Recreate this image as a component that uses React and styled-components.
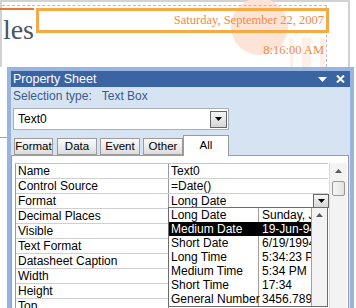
import React from "react";
import styled, { createGlobalStyle } from "styled-components";

const GlobalStyle = createGlobalStyle`
  html, body {
    margin: 0;
    padding: 0;
    background: #fff;
  }
  body {
    width: 356px;
    height: 308px;
    overflow: hidden;
  }
`;

const Screen = styled.div`
  position: relative;
  width: 356px;
  height: 308px;
  overflow: hidden;
  background: #fff;
  font-family: "Liberation Sans", Arial, sans-serif;
  font-size: 12px;
  color: #000;
`;

/* ---------- report design surface (top) ---------- */

const Header = styled.div`
  position: relative;
  box-sizing: border-box;
  width: 350px;
  height: 67px;
  border-top: 2px solid #d2d2d2;
  border-left: 2px solid #d2d2d2;
  border-right: 2px solid #d2d2d2;
`;

const Circle = styled.div`
  position: absolute;
  left: 229px;
  top: -4px;
  width: 57px;
  height: 57px;
  border-radius: 50%;
  background: #fde4d6;
`;

const Stripe = styled.div`
  position: absolute;
  top: 36px;
  bottom: 0;
  left: ${(p) => p.$x}px;
  width: ${(p) => p.$w}px;
  background: #fdf0e9;
`;

const Section = styled.div`
  position: relative;
  box-sizing: border-box;
  width: 325px;
  height: 62px;
  margin-top: 3px;
  border-top: 1px dashed #bdbdbd;
  border-right: 1px dashed #bdbdbd;
`;

const FieldRow = styled.div`
  display: flex;
  align-items: flex-start;
  margin-top: 2px;
`;

const TitleLabel = styled.div`
  box-sizing: border-box;
  width: 34px;
  height: 36px;
  margin-left: -2px;
  border-top: 2px solid #e8782f;
  overflow: hidden;
  display: flex;
  justify-content: flex-end;
  font-family: "Liberation Serif", "Times New Roman", serif;
  font-size: 28px;
  line-height: 40px;
  color: #4a5462;
`;

const DateBox = styled.div`
  box-sizing: border-box;
  width: 293px;
  height: 25px;
  margin-left: 2px;
  margin-right: -4px;
  border: 3px solid #f7a944;
  padding-right: 2px;
  text-align: right;
  font-family: "Liberation Serif", "Times New Roman", serif;
  font-size: 12.5px;
  line-height: 19px;
  color: #ef8b47;
`;

const TimeText = styled.div`
  width: 322px;
  margin-top: -1px;
  text-align: right;
  font-family: "Liberation Serif", "Times New Roman", serif;
  font-size: 12.5px;
  line-height: 14px;
  color: #ef8b47;
`;

const OrangeTick = styled.div`
  position: absolute;
  left: 0;
  top: 137px;
  width: 7px;
  height: 1px;
  background: #f08a45;
`;

/* ---------- property sheet window ---------- */

const Window = styled.div`
  box-sizing: border-box;
  width: 347px;
  height: 241px;
  margin-left: 7px;
  padding: 4px 4px 0 3px;
  border-left: 1px solid #a8b1bf;
  background: #98b5e2;
  display: flex;
  flex-direction: column;
`;

const TitleBar = styled.div`
  height: 16px;
  flex: none;
  display: flex;
  align-items: center;
  padding: 0 5px 0 2px;
  background: #3a64a2;
  color: #fff;
  font-size: 12.5px;
`;

const TitleText = styled.span`
  flex: 1;
  line-height: 16px;
`;

const TitleIcons = styled.div`
  display: flex;
  align-items: center;
  gap: 9px;
`;

const Panel = styled.div`
  flex: 1;
  background: #d5e3f3;
  display: flex;
  flex-direction: column;
  min-height: 0;
`;

const SelectionType = styled.div`
  height: 19px;
  line-height: 19px;
  padding-left: 2px;
  color: #395b8f;
  white-space: nowrap;
`;

const SelValue = styled.span`
  margin-left: 10px;
`;

const Combo = styled.div`
  box-sizing: border-box;
  width: 216px;
  height: 22px;
  margin: 2px 0 0 2px;
  border: 1px solid #a9b0b9;
  background: #fff;
  display: flex;
  align-items: center;
  padding: 0 1px 0 4px;
`;

const ComboText = styled.span`
  flex: 1;
`;

const DropButton = styled.div`
  box-sizing: border-box;
  width: ${(p) => p.$w}px;
  height: ${(p) => p.$h}px;
  border: 1px solid #666;
  background: linear-gradient(#f6f6f6, #d6d6d6);
  display: flex;
  align-items: center;
  justify-content: center;
`;

const TabRow = styled.div`
  display: flex;
  align-items: flex-end;
  height: 20px;
  margin-top: 5px;
  padding-left: 3px;
  position: relative;
  z-index: 1;
`;

const Tab = styled.div`
  box-sizing: border-box;
  width: ${(p) => p.$w}px;
  margin-right: ${(p) => p.$gap}px;
  height: ${(p) => (p.$active ? 21 : 17)}px;
  margin-bottom: ${(p) => (p.$active ? -1 : 0)}px;
  border: 1px solid #9c9c9c;
  border-bottom: ${(p) => (p.$active ? "none" : "1px solid #9c9c9c")};
  background: ${(p) =>
    p.$active ? "#fff" : "linear-gradient(#fafafa, #e9e9e9 60%, #dcdcdc)"};
  text-align: center;
  font-size: 11.5px;
  line-height: ${(p) => (p.$active ? 19 : 15)}px;
  white-space: nowrap;
`;

const TabBody = styled.div`
  flex: 1;
  box-sizing: border-box;
  width: 338px;
  border: 1px solid #9c9c9c;
  border-bottom: none;
  background: #fff;
  padding: 7px 0 0 3px;
  display: flex;
  align-items: flex-start;
  overflow: hidden;
`;

const Grid = styled.div`
  position: relative;
  box-sizing: border-box;
  width: 313px;
  border-left: 1px solid #9a9a9a;
  border-top: 1px solid #c6c6c6;
`;

const Row = styled.div`
  display: flex;
  height: 15px;
  box-sizing: border-box;
  border-bottom: 1px solid #cfcfcf;
`;

const NameCell = styled.div`
  width: 152px;
  padding-left: 2px;
  box-sizing: border-box;
  line-height: 14px;
  white-space: nowrap;
`;

const ValueCell = styled.div`
  position: relative;
  flex: 1;
  border-left: 1px solid #9a9a9a;
  padding-left: 2px;
  line-height: 14px;
  white-space: nowrap;
`;

const CellButton = styled.div`
  position: absolute;
  right: -1px;
  top: 0;
`;

const ScrollBar = styled.div`
  box-sizing: border-box;
  width: 18px;
  height: 160px;
  margin-left: 1px;
  border-left: 1px solid #dadada;
  background: #f3f3f3;
  display: flex;
  flex-direction: column;
  align-items: center;
`;

const ScrollArrow = styled.div`
  height: 16px;
  display: flex;
  align-items: center;
  justify-content: center;
`;

const Thumb = styled.div`
  box-sizing: border-box;
  width: 13px;
  height: 15px;
  margin-top: 2px;
  border: 1px solid #9a9a9a;
  border-radius: 2px;
  background: linear-gradient(90deg, #f7f7f7, #e2e2e2);
`;

/* ---------- dropdown list over the grid ---------- */

const DropList = styled.div`
  position: absolute;
  left: 152px;
  top: 43px;
  width: 160px;
  box-sizing: border-box;
  border: 1px solid #6c6c6c;
  background: #fff;
  display: flex;
  z-index: 2;
`;

const ListRows = styled.div`
  flex: 1;
  min-width: 0;
`;

const ListRow = styled.div`
  display: flex;
  height: 14px;
  line-height: 14px;
  background: ${(p) => (p.$selected ? "#000" : "#fff")};
  color: ${(p) => (p.$selected ? "#fff" : "#000")};
  white-space: nowrap;
`;

const ListLabel = styled.div`
  width: 90px;
  flex: none;
  box-sizing: border-box;
  padding-left: 2px;
  border-right: 1px solid ${(p) => (p.$selected ? "#000" : "#a0a0a0")};
`;

const ListSample = styled.div`
  flex: 1;
  min-width: 0;
  overflow: hidden;
  padding-left: 3px;
`;

const ListScroll = styled.div`
  width: 16px;
  flex: none;
  box-sizing: border-box;
  border-left: 1px solid #a0a0a0;
  background: #f3f3f3;
  display: flex;
  justify-content: center;
  padding-top: 5px;
`;

const DownTriangle = ({ color = "#000", w = 7, h = 4 }) => (
  <svg width={w} height={h} viewBox={`0 0 ${w} ${h}`}>
    <polygon points={`0,0 ${w},0 ${w / 2},${h}`} fill={color} />
  </svg>
);

const UpTriangle = ({ color = "#5a5a5a", w = 7, h = 4 }) => (
  <svg width={w} height={h} viewBox={`0 0 ${w} ${h}`}>
    <polygon points={`0,${h} ${w},${h} ${w / 2},0`} fill={color} />
  </svg>
);

const CloseIcon = () => (
  <svg width="9" height="8" viewBox="0 0 9 8">
    <path d="M1 0.5 L8 7.5 M8 0.5 L1 7.5" stroke="#fff" strokeWidth="2" />
  </svg>
);

const properties = [
  ["Name", "Text0"],
  ["Control Source", "=Date()"],
  ["Format", "Long Date", true],
  ["Decimal Places", ""],
  ["Visible", ""],
  ["Text Format", ""],
  ["Datasheet Caption", ""],
  ["Width", ""],
  ["Height", ""],
  ["Top", ""],
];

const formats = [
  ["Long Date", "Sunday, June 19, 1994"],
  ["Medium Date", "19-Jun-94"],
  ["Short Date", "6/19/1994"],
  ["Long Time", "5:34:23 PM"],
  ["Medium Time", "5:34 PM"],
  ["Short Time", "17:34"],
  ["General Number", "3456.789"],
];

const tabs = [
  { label: "Format", w: 39, gap: 4 },
  { label: "Data", w: 40, gap: 3 },
  { label: "Event", w: 40, gap: 3 },
  { label: "Other", w: 40, gap: 0 },
  { label: "All", w: 46, gap: 0, active: true },
];

export default function App() {
  return (
    <Screen>
      <GlobalStyle />
      <Header>
        <Circle />
        <Stripe $x={288} $w={3} />
        <Stripe $x={300} $w={9} />
        <Stripe $x={318} $w={5} />
        <Section>
          <FieldRow>
            <TitleLabel>les</TitleLabel>
            <DateBox>Saturday, September 22, 2007</DateBox>
          </FieldRow>
          <TimeText>8:16:00 AM</TimeText>
        </Section>
      </Header>
      <OrangeTick />

      <Window>
        <TitleBar>
          <TitleText>Property Sheet</TitleText>
          <TitleIcons>
            <DownTriangle color="#fff" w={9} h={5} />
            <CloseIcon />
          </TitleIcons>
        </TitleBar>
        <Panel>
          <SelectionType>
            Selection type:<SelValue>Text Box</SelValue>
          </SelectionType>
          <Combo>
            <ComboText>Text0</ComboText>
            <DropButton $w={17} $h={17}>
              <DownTriangle />
            </DropButton>
          </Combo>
          <TabRow>
            {tabs.map((t) => (
              <Tab key={t.label} $w={t.w} $gap={t.gap} $active={t.active}>
                {t.label}
              </Tab>
            ))}
          </TabRow>
          <TabBody>
            <Grid>
              {properties.map(([name, value, hasButton]) => (
                <Row key={name}>
                  <NameCell>{name}</NameCell>
                  <ValueCell>
                    {value}
                    {hasButton && (
                      <CellButton>
                        <DropButton $w={16} $h={14}>
                          <DownTriangle />
                        </DropButton>
                      </CellButton>
                    )}
                  </ValueCell>
                </Row>
              ))}
              <DropList>
                <ListRows>
                  {formats.map(([label, sample]) => {
                    const selected = label === "Medium Date";
                    return (
                      <ListRow key={label} $selected={selected}>
                        <ListLabel $selected={selected}>{label}</ListLabel>
                        <ListSample>{sample}</ListSample>
                      </ListRow>
                    );
                  })}
                </ListRows>
                <ListScroll>
                  <UpTriangle />
                </ListScroll>
              </DropList>
            </Grid>
            <ScrollBar>
              <ScrollArrow>
                <UpTriangle />
              </ScrollArrow>
              <Thumb />
            </ScrollBar>
          </TabBody>
        </Panel>
      </Window>
    </Screen>
  );
}
